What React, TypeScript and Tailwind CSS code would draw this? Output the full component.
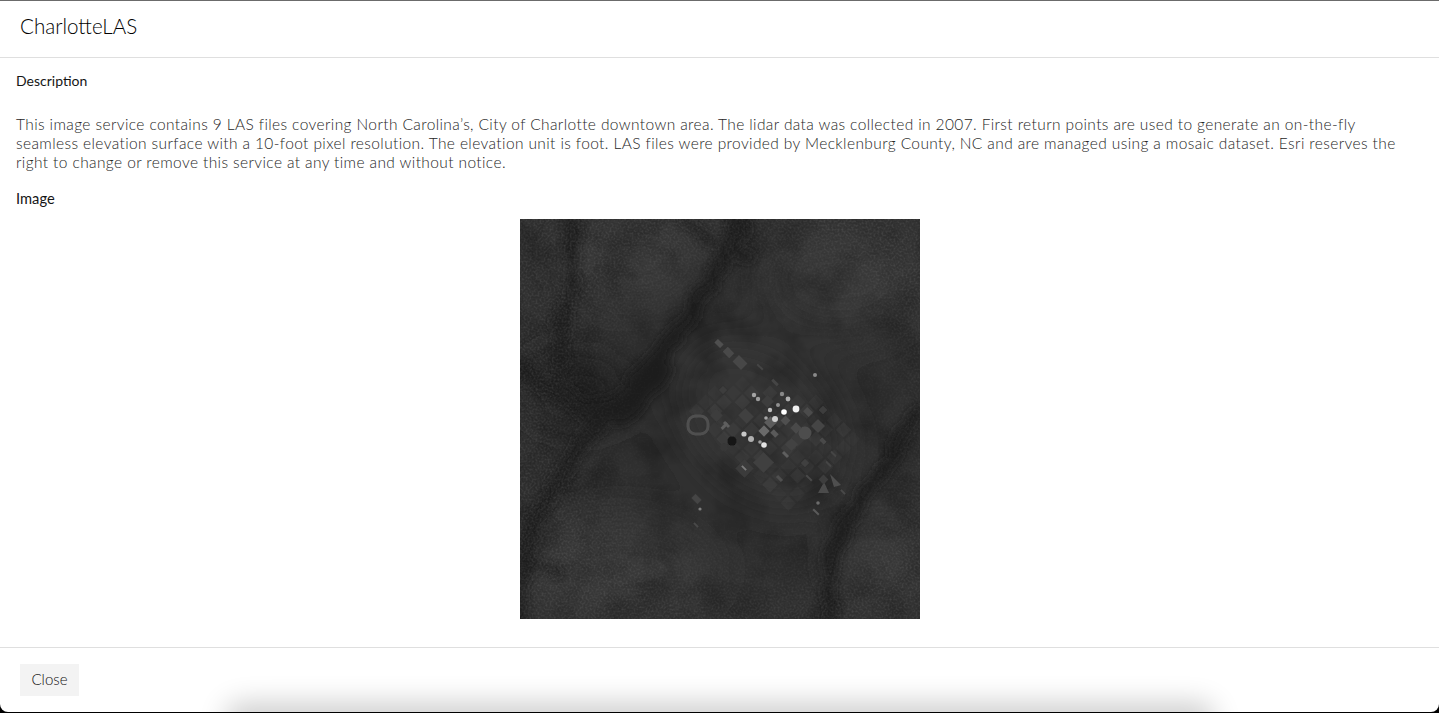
const blocks: [number, number, number, number, string][] = [
  // x, y, w, h, fill - city blocks, rotated 45deg around their centre
  [195, 122, 8, 5, '#505050'],
  [204, 130, 9, 7, '#4a4a4a'],
  [214, 139, 12, 9, '#464646'],
  [236, 147, 8, 2, '#444444'],
  [251, 162, 8, 3, '#444444'],
  [220, 192, 12, 10, '#404040'],
  [243, 178, 9, 9, '#3e3e3e'],
  [246, 199, 9, 9, '#5c5c5c'],
  [240, 208, 8, 8, '#6a6a6a'],
  [251, 212, 7, 5, '#5a5a5a'],
  [262, 198, 7, 7, '#505050'],
  [284, 190, 8, 6, '#4c4c4c'],
  [293, 202, 10, 10, '#444444'],
  [272, 205, 8, 8, '#4a4a4a'],
  [267, 221, 9, 9, '#424242'],
  [300, 188, 6, 6, '#3e3e3e'],
  [236, 236, 15, 15, '#3f3f3f'],
  [218, 243, 13, 13, '#3a3a3a'],
  [262, 234, 7, 3, '#5e5e5e'],
  [203, 204, 7, 3, '#5e5e5e'],
  [203, 203, 3, 8, '#5e5e5e'],
  [221, 248, 6, 2, '#7a7a7a'],
  [300, 220, 6, 4, '#4a4a4a'],
  [310, 234, 7, 2, '#444444'],
  [305, 244, 7, 2, '#444444'],
  [282, 241, 6, 6, '#3f3f3f'],
  [285, 258, 8, 2, '#4a4a4a'],
  [300, 257, 7, 7, '#3c3c3c'],
  [320, 272, 6, 2, '#4a4a4a'],
  [256, 258, 7, 3, '#505050'],
  [172, 277, 9, 6, '#444444'],
  [292, 292, 8, 2, '#5a5a5a'],
  [173, 305, 6, 2, '#484848'],
  [200, 168, 6, 6, '#3c3c3c'],
  [192, 192, 9, 9, '#3e3e3e'],
]

const dots: [number, number, number, string][] = [
  [264, 193, 2.8, '#ffffff'],
  [276, 190, 3.4, '#f0f0f0'],
  [255, 200, 3, '#d0d0d0'],
  [244, 226, 2.8, '#e4e4e4'],
  [224, 215, 2.6, '#c8c8c8'],
  [231, 220, 3, '#b0b0b0'],
  [240, 223, 1.8, '#a0a0a0'],
  [250, 191, 2.2, '#c0c0c0'],
  [246, 199, 1.8, '#a8a8a8'],
  [234, 176, 2.2, '#a4a4a4'],
  [238, 180, 2.2, '#9c9c9c'],
  [268, 180, 2.4, '#b0b0b0'],
  [262, 175, 2.2, '#888888'],
  [258, 186, 2, '#909090'],
  [295, 156, 2, '#8a8a8a'],
  [180, 290, 1.6, '#7e7e7e'],
  [298, 284, 1.8, '#6c6c6c'],
]

const valleys: [string, number][] = [
  ['M223 -4 C215 30 190 60 172 92 C150 125 115 160 85 195 C62 222 35 262 20 295 C8 320 0 350 0 404', 15],
  ['M50 -4 C46 20 58 40 52 62 C44 84 38 110 40 150', 10],
  ['M0 148 C30 170 70 205 110 190 C125 180 130 165 140 150', 20],
  ['M307 404 C306 370 308 335 322 310 C340 285 358 262 372 235 C380 215 388 200 400 190', 13],
  ['M155 0 C180 18 205 25 232 40', 8],
  ['M0 335 C12 345 25 350 34 358', 10],
]

// faint street grid of downtown, in rotated (u, v) space
const grid: { u: number; v: number; o: number }[] = []
for (let u = -5; u <= 5; u++) {
  for (let v = -4; v <= 3; v++) {
    grid.push({ u: u * 13, v: v * 13, o: ((u * 7 + v * 11 + 40) % 5) * 0.008 + 0.006 })
  }
}

function LidarImage() {
  return (
    <svg width="400" height="400" viewBox="0 0 400 400" className="block">
      <defs>
        <filter id="soft" x="-20%" y="-20%" width="140%" height="140%">
          <feTurbulence type="fractalNoise" baseFrequency="0.035" numOctaves="3" seed="4" result="n" />
          <feDisplacementMap in="SourceGraphic" in2="n" scale="24" xChannelSelector="R" yChannelSelector="G" />
          <feGaussianBlur stdDeviation="5" />
        </filter>
        <filter id="wide" x="-30%" y="-30%" width="160%" height="160%">
          <feGaussianBlur stdDeviation="22" />
        </filter>
        <filter id="tiny">
          <feGaussianBlur stdDeviation="0.6" />
        </filter>
        <filter id="grain" x="0" y="0" width="100%" height="100%">
          <feTurbulence type="fractalNoise" baseFrequency="0.5" numOctaves="2" seed="7" />
          <feColorMatrix values="0 0 0 0 1  0 0 0 0 1  0 0 0 0 1  1.6 0 0 0 -0.62" />
        </filter>
        <filter id="mottle" x="0" y="0" width="100%" height="100%">
          <feTurbulence type="fractalNoise" baseFrequency="0.025" numOctaves="4" seed="12" />
          <feColorMatrix values="0 0 0 0 0  0 0 0 0 0  0 0 0 0 0  2.4 0 0 0 -0.95" />
        </filter>
        <radialGradient id="edge" cx="0.58" cy="0.5" r="0.62">
          <stop offset="0.35" stopColor="#000" />
          <stop offset="0.85" stopColor="#fff" />
        </radialGradient>
        <mask id="edgeMask">
          <rect width="400" height="400" fill="url(#edge)" />
        </mask>
      </defs>
      <rect width="400" height="400" fill="#2f2f2f" />
      <g filter="url(#wide)">
        <ellipse cx="115" cy="40" rx="70" ry="50" fill="#393939" />
        <ellipse cx="320" cy="60" rx="80" ry="55" fill="#373737" />
        <ellipse cx="100" cy="350" rx="95" ry="50" fill="#383838" />
        <ellipse cx="365" cy="340" rx="45" ry="50" fill="#383838" />
        <ellipse cx="240" cy="200" rx="70" ry="100" fill="#343434" transform="rotate(-45 240 200)" />
        <ellipse cx="60" cy="170" rx="60" ry="40" fill="#232323" />
      </g>
      <rect width="400" height="400" filter="url(#mottle)" opacity="0.22" />
      <g filter="url(#soft)" fill="none" strokeLinecap="round">
        {valleys.map(([d, w], i) => (
          <path key={i} d={d} stroke="#1c1c1c" strokeWidth={w} />
        ))}
      </g>
      <g mask="url(#edgeMask)">
        <rect width="400" height="400" filter="url(#grain)" opacity="0.13" />
      </g>
      <g transform="rotate(45 250 210)">
        {grid.map((b, i) => (
          <rect key={i} x={250 + b.u - 5} y={210 + b.v - 5} width="11" height="11" fill="#fff" opacity={b.o} />
        ))}
      </g>
      <g filter="url(#tiny)">
        <rect x="168" y="197" width="20" height="18" rx="7.5" fill="none" stroke="#505050" strokeWidth="3" />
        <circle cx="212" cy="222" r="4.5" fill="#121212" />
        <circle cx="204" cy="228" r="4" fill="#383838" />
        <circle cx="285" cy="214" r="6.5" fill="#4e4e4e" />
        <path d="M304 263 L309 274 L298 274 Z" fill="#4c4c4c" />
        <path d="M310 255 L321 266 L314 268 Z" fill="#505050" />
        {blocks.map(([x, y, w, h, fill], i) => (
          <rect key={i} x={x} y={y} width={w} height={h} fill={fill} transform={`rotate(45 ${x + w / 2} ${y + h / 2})`} />
        ))}
        {dots.map(([cx, cy, r, fill], i) => (
          <circle key={i} cx={cx} cy={cy} r={r} fill={fill} />
        ))}
      </g>
    </svg>
  )
}

export default function App() {
  return (
    <div className="relative h-[713px] w-full overflow-hidden bg-black font-['Lato','Liberation_Sans',sans-serif]">
      <div className="flex h-[712px] flex-col rounded-b-[8px] border-t border-t-[#6b6b6b] bg-white">
        <div className="flex h-[57px] items-center border-b border-[#dfdfdf] px-5 pb-[5px] text-[20.6px] font-light text-black">
          CharlotteLAS
        </div>

        <div className="flex-1 px-4 pt-[14px]">
          <h3 className="text-[14px] leading-[18px] font-normal text-[#151515]">Description</h3>
          <p className="mt-[25px] text-[15.5px] leading-[19px] font-light tracking-[0.39px] text-[#262626]">
            This image service contains 9 LAS files covering North Carolina’s, City of Charlotte downtown area. The lidar data was collected in 2007. First return points are used to generate an on-the-fly
            <br />
            seamless elevation surface with a 10-foot pixel resolution. The elevation unit is foot. LAS files were provided by Mecklenburg County, NC and are managed using a mosaic dataset. Esri reserves the
            <br />
            right to change or remove this service at any time and without notice.
          </p>
          <h3 className="mt-[17px] text-[14.7px] leading-[18px] font-normal text-[#151515]">Image</h3>
          <div className="mt-[12px] flex justify-center">
            <LidarImage />
          </div>
        </div>

        <div className="flex h-[65px] items-start border-t border-[#dfdfdf] px-5 pt-4">
          <button className="h-8 w-[59px] bg-[#f3f3f3] pb-[2px] text-[15px] font-light text-[#111111]">Close</button>
        </div>
      </div>
      {/* shadow from the card behind, leaking up over the bottom edge */}
      <div className="pointer-events-none absolute bottom-[-14px] left-[235px] h-[14px] w-[970px] rounded-[8px] shadow-[0_0_28px_10px_rgba(0,0,0,0.2)]" />
      <div className="absolute right-0 bottom-0 left-0 h-px bg-black" />
    </div>
  )
}
